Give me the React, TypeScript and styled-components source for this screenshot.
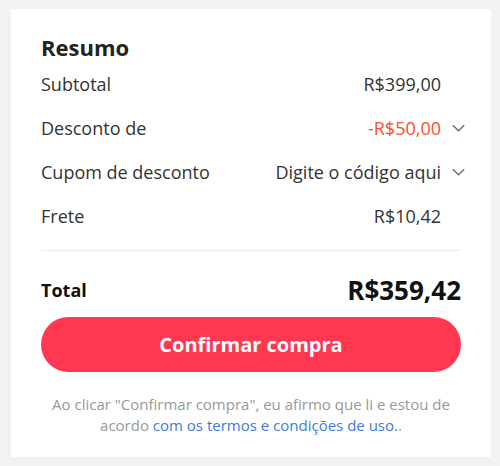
import React from 'react';
import styled, { createGlobalStyle } from 'styled-components';

const GlobalStyle = createGlobalStyle`
  body {
    margin: 0;
    background: #f2f2f2;
    font-family: 'Open Sans', 'Noto Sans', sans-serif;
    color: #333;
  }
`;

const Page = styled.div`
  padding: 9px 9px 9px 11px;
`;

const Card = styled.section`
  width: 480px;
  height: 448px;
  box-sizing: border-box;
  background: #fff;
  padding: 23px 30px 0;
  display: flex;
  flex-direction: column;
`;

const Title = styled.h2`
  margin: 0;
  font-size: 22px;
  font-weight: 700;
  line-height: 30px;
  color: #222;
`;

const Row = styled.div`
  display: flex;
  align-items: center;
  justify-content: space-between;
  height: 44px;
  font-size: 18px;
`;

const Label = styled.span`
  color: #333;
`;

const Value = styled.span<{ $accent?: boolean; $arrow?: boolean }>`
  display: flex;
  align-items: center;
  gap: 11px;
  color: ${(p) => (p.$accent ? '#ff4b2b' : '#333')};
  padding-right: ${(p) => (p.$arrow ? '0' : '20px')};
  margin-right: ${(p) => (p.$arrow ? '-4px' : '0')};
`;

const Divider = styled.hr`
  border: 0;
  border-top: 1px solid #ececec;
  margin: 12px 0 0;
`;

const TotalRow = styled.div`
  display: flex;
  align-items: center;
  justify-content: space-between;
  height: 77px;
  color: #111;
  font-weight: 700;
`;

const TotalLabel = styled.span`
  font-size: 18px;
`;

const TotalValue = styled.span`
  font-size: 26px;
`;

const ConfirmButton = styled.button`
  height: 55px;
  margin-top: -11px;
  border: 0;
  border-radius: 28px;
  background: #ff3750;
  color: #fff;
  font-family: inherit;
  font-size: 20px;
  font-weight: 700;
`;

const Terms = styled.p`
  margin: 22px 0 0;
  text-align: center;
  font-size: 15px;
  line-height: 21px;
  color: #999;

  a {
    color: #3e7be0;
    text-decoration: none;
  }
`;

const Chevron = () => (
  <svg width="13" height="8" viewBox="0 0 13 8" fill="none">
    <path d="M0.8 1.2l5.7 5.6 5.7-5.6" stroke="#666" strokeWidth="1.2" />
  </svg>
);

export default function App() {
  return (
    <Page>
      <GlobalStyle />
      <Card>
        <Title>Resumo</Title>
        <Row>
          <Label>Subtotal</Label>
          <Value>R$399,00</Value>
        </Row>
        <Row>
          <Label>Desconto de</Label>
          <Value $accent $arrow>
            -R$50,00
            <Chevron />
          </Value>
        </Row>
        <Row>
          <Label>Cupom de desconto</Label>
          <Value $arrow>
            Digite o código aqui
            <Chevron />
          </Value>
        </Row>
        <Row>
          <Label>Frete</Label>
          <Value>R$10,42</Value>
        </Row>
        <Divider />
        <TotalRow>
          <TotalLabel>Total</TotalLabel>
          <TotalValue>R$359,42</TotalValue>
        </TotalRow>
        <ConfirmButton>Confirmar compra</ConfirmButton>
        <Terms>
          Ao clicar "Confirmar compra", eu afirmo que li e estou de acordo{' '}
          <a href="#">com os termos e condições de uso.</a>.
        </Terms>
      </Card>
    </Page>
  );
}
